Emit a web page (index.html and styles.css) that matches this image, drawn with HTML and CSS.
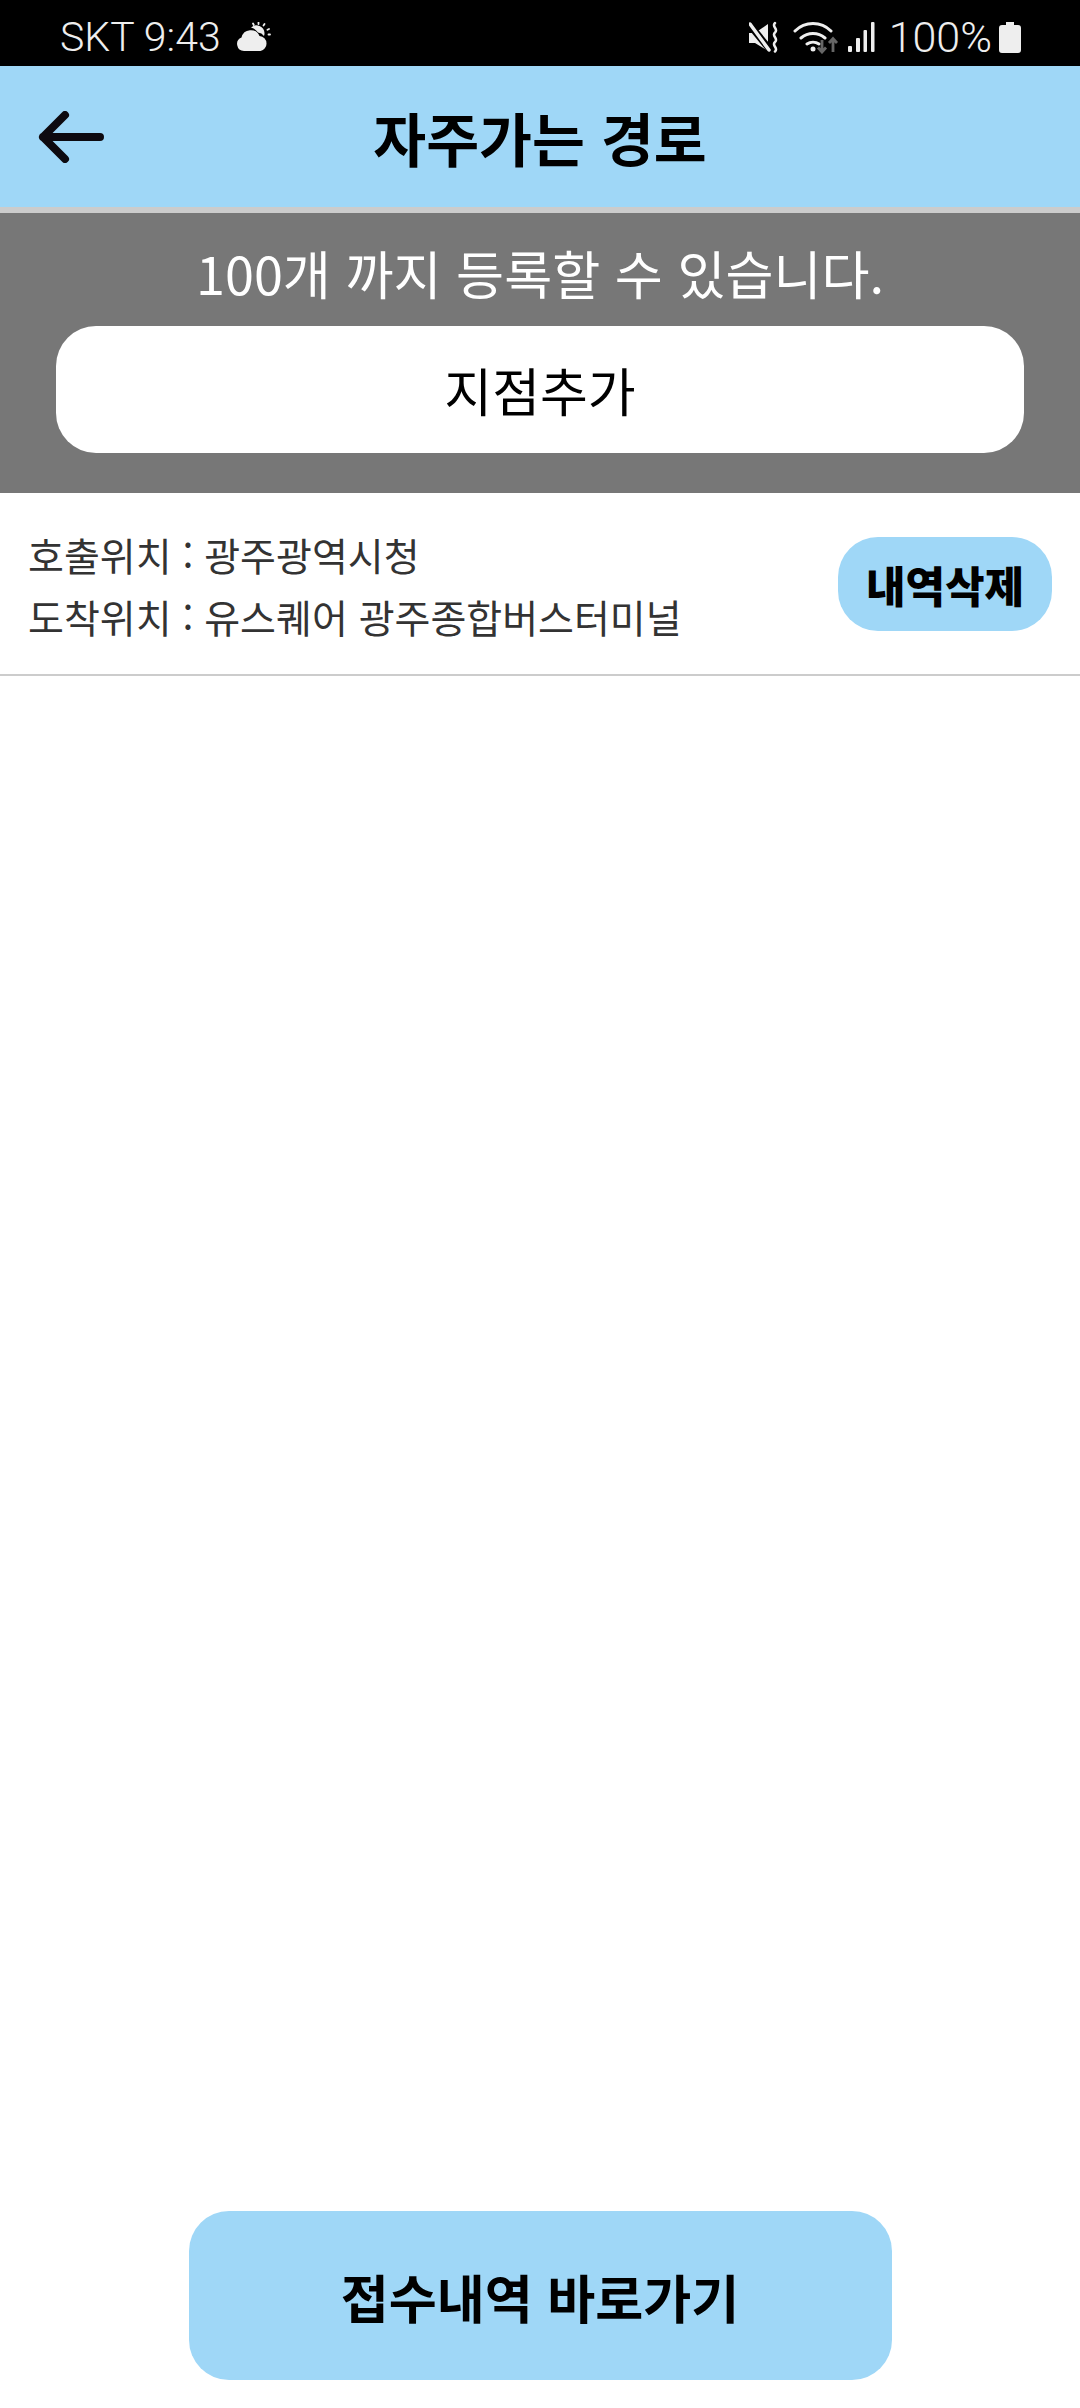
FILE: index.html
```html
<!DOCTYPE html>
<html lang="ko">
    <head>
        <meta charset="UTF-8">
        <meta name="viewport" content="width=device-width, initial-scale=1.0">
        <link rel="stylesheet" href="styles.css">
        <title>자주가는 경로</title>
    </head>
    <body>
        <div class="status-bar">
            <div class="status-left">
                <span class="status-text">SKT 9:43</span>
                <svg class="weather-icon" viewBox="0 0 36 30" width="36" height="30">
                    <path d="M15 5.500a8 8 0 0 1 13.500 5.500 8 8 0 0 1-.5 3 8 8 0 0 0-6-3.500 12 12 0 0 0-7-5z" fill="#eee"/>
                    <path d="M8 29a7 7 0 0 1-2.500-13.500 9.500 9.500 0 0 1 18-1.500 7.500 7.500 0 0 1 7 7.500 7.500 7.500 0 0 1-6 7.500z" fill="#eee"/>
                    <path d="M17 1.500l.8 1.500M22.500.5v1.500M28.500 2l-1 1.500M33 7l-1.500.8M34 12.500h-1.500" stroke="#eee" stroke-width="1.800" stroke-linecap="round"/>
                </svg>
            </div>
            <div class="status-right">
                <svg class="mute-icon" viewBox="0 0 30 32" width="30" height="32">
                    <path d="M0 12h6L19 3v27L6 22H0z" fill="#eee"/>
                    <path d="M0 3l22 27" stroke="#000" stroke-width="7"/>
                    <path d="M1 3l19 26" stroke="#eee" stroke-width="3.500" stroke-linecap="round"/>
                    <path d="M26 2c-4 3.500 4 6 0 9.500s4 6 0 9.500 4 6 0 9.500" fill="none" stroke="#eee" stroke-width="2.500" stroke-linecap="round"/>
                </svg>
                <svg class="wifi-icon" viewBox="0 0 46 34" width="46" height="34">
                    <path d="M2 11c10-10 26-10 36 0M8 18c7-6 17-6 24 0M14 24c3.500-2.500 8.500-2.500 12 0" fill="none" stroke="#eee" stroke-width="3" stroke-linecap="round"/>
                    <circle cx="20" cy="29" r="2.500" fill="#eee"/>
                    <path d="M29 20v12M25 27.500l4 4.500 4-4.500" fill="none" stroke="#666" stroke-width="2.800"/>
                    <path d="M40 32V19M36 23l4-4.500 4 4.500" fill="none" stroke="#666" stroke-width="2.800"/>
                </svg>
                <svg class="signal-icon" viewBox="0 0 28 32" width="28" height="32">
                    <rect x="1" y="25" width="4" height="6" rx="1" fill="#eee"/>
                    <rect x="9" y="17" width="4" height="14" rx="1" fill="#eee"/>
                    <rect x="16.500" y="9" width="3.500" height="22" rx="1" fill="#eee"/>
                    <rect x="24" y="1" width="3.500" height="30" rx="1" fill="#eee"/>
                </svg>
                <span class="status-text status-battery">100%</span>
                <svg class="battery-icon" viewBox="0 0 22 32" width="22" height="32">
                    <path d="M7 1h8v3h4a3 3 0 0 1 3 3v22a3 3 0 0 1-3 3H3a3 3 0 0 1-3-3V7a3 3 0 0 1 3-3h4z" fill="#eee"/>
                </svg>
            </div>
        </div>

        <div class="header">
            <svg class="back-icon" viewBox="0 0 66 52" width="66" height="52">
                <path d="M62 26H5M27 4L5 26l22 22" fill="none" stroke="#0d0a10" stroke-width="8" stroke-linecap="round" stroke-linejoin="round"/>
            </svg>
            <h1 class="titleFont">자주가는 경로</h1>
        </div>

        <div class="add-panel">
            <p class="add-notice">100개 까지 등록할 수 있습니다.</p>
            <button class="add-button">지점추가</button>
        </div>

        <div class="route-row">
            <div class="route-info">
                <p>호출위치 : 광주광역시청</p>
                <p>도착위치 : 유스퀘어 광주종합버스터미널</p>
            </div>
            <button class="delete-button">내역삭제</button>
        </div>

        <div class="footer">
            <button class="history-button">접수내역 바로가기</button>
        </div>
    </body>
</html>
```

FILE: styles.css
```css
html,
body {
    width: 1080px;
    height: 2408px;
    margin: 0;
    background: #fff;
    font-family: "Noto Sans CJK KR", Roboto, sans-serif;
}

body {
    display: flex;
    flex-direction: column;
}

p,
h1 {
    margin: 0;
}

button {
    border: none;
    padding: 0;
    font-family: inherit;
    cursor: pointer;
}

.status-bar {
    height: 66px;
    box-sizing: border-box;
    background: #000;
    display: flex;
    justify-content: space-between;
    align-items: center;
    padding: 8px 59px 0 60px;
}

.status-left,
.status-right {
    display: flex;
    align-items: center;
}

.status-text {
    font-family: Roboto, sans-serif;
    font-size: 41px;
    font-weight: 300;
    color: #eee;
}

.status-battery {
    font-size: 43px;
}

.weather-icon {
    margin-left: 15px;
}

.mute-icon {
    margin-right: 14px;
}

.wifi-icon {
    margin-right: 8px;
}

.signal-icon {
    margin-right: 14px;
}

.battery-icon {
    margin-left: 7px;
}

.header {
    height: 141px;
    background: #9fd7f7;
    border-bottom: 6px solid #ccc;
    display: flex;
    align-items: center;
    justify-content: center;
    position: relative;
}

.back-icon {
    position: absolute;
    left: 38px;
    top: 45px;
}

.titleFont {
    font-size: 57.5px;
    font-weight: 700;
    color: #000;
}

.add-panel {
    height: 280px;
    background: #777;
    box-sizing: border-box;
    padding: 21px 56px 0;
    display: flex;
    flex-direction: column;
    align-items: center;
}

.add-notice {
    font-size: 52.2px;
    line-height: 76px;
    color: #fff;
    white-space: nowrap;
}

.add-button {
    width: 100%;
    height: 127px;
    margin-top: 16px;
    background: #fff;
    border-radius: 40px;
    font-size: 52px;
    color: #000;
}

.route-row {
    height: 181px;
    border-bottom: 2px solid #ccc;
    display: flex;
    justify-content: space-between;
    align-items: center;
    padding: 0 28px;
}

.route-info {
    padding-top: 3px;
    font-size: 39px;
    line-height: 62px;
    color: #333;
}

.delete-button {
    width: 214px;
    height: 94px;
    background: #9fd7f7;
    border-radius: 40px;
    font-size: 43px;
    font-weight: 900;
    color: #000;
}

.footer {
    margin-top: auto;
    padding-bottom: 28px;
    display: flex;
    justify-content: center;
}

.history-button {
    width: 703px;
    height: 169px;
    background: #9fd7f7;
    border-radius: 40px;
    font-size: 52.2px;
    font-weight: 700;
    color: #000;
}
```
